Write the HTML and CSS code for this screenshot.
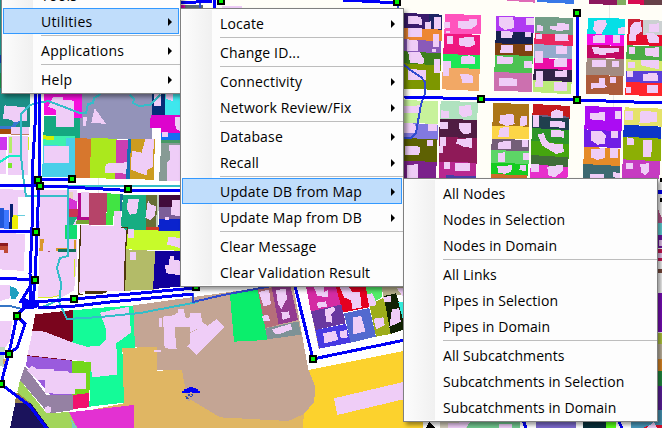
FILE: index.html
```
<!DOCTYPE html>
<html lang="en">
<head>
<meta charset="utf-8">
<title>Network map</title>
<link rel="stylesheet" href="styles.css">
</head>
<body>
<main class="workspace">
<svg class="map" viewBox="0 0 662 428" width="662" height="428" aria-hidden="true">
  <!-- north-west blocks -->
  <g transform="translate(0 90) scale(.333333)">
    <path fill="#1b8f87" d="M0-270H90V110H0z"/><path fill="#0b3c9c" d="M0-105H20V-80H0z"/><path fill="#148a43" d="M0-50H20V-5H0z"/><path fill="#fffef8" d="M90-20H132V260H90z"/>
    <path fill="#3878d0" d="M0 108H34L58 80 66 86 42 116H0z"/>
    <path fill="#a54b08" d="M0 116H33V132H0z"/>
    <path fill="#efcdf7" d="M14 46L76 52 82 60 80 92 40 96 36 90 9 86zM33 112H87V131H33z"/>
    <path stroke="#a03c18" stroke-width="2" d="M34 133H88"/>
    <path fill="#cf35ef" d="M0 141H21V179H0z"/><path fill="#efcdf7" d="M0 179H18V253H0zM30 138H84V255H24V138z"/>
    <path fill="#b5ee6a" d="M28 142H37V190H26z"/><path fill="#7be82b" d="M24 219H36V234H24z"/><path fill="#d4ef22" d="M84 142H87V180H84z"/>
    <path fill="#f610dc" d="M133 12H245V84H170V76H132z"/><path fill="#15a881" d="M132 78H168V84H242V144H130z"/>
    <path fill="#efcdf7" d="M158 22L188 20 190 30 222 32V110H168V60L145 50z"/>
    <path fill="#9393b9" d="M245 12H456V147H240V84H245z"/>
    <path fill="#efcdf7" d="M284 54L318 102 274 98zM249 82L261 80 258 108H249z"/>
    <path fill="#052f78" d="M457 12H495V76H457z"/><path fill="#3ee7ed" d="M495 12H541V76H495z"/><path fill="#efcdf7" d="M462 12H484V48H462zM498 12H520V34L498 26z"/>
    <path fill="#dd04cd" d="M452 75H541V130H484V113H450z"/><path fill="#efcdf7" d="M525 82H541V124L527 116z"/>
    <path fill="#136ff2" d="M484 130H541V153H484z"/><path fill="#efcdf7" d="M486 125H504V141H486z"/>
    <path fill="#469a64" d="M484 150H541V160H484z"/><path fill="#879b95" d="M484 158H541V272H477z"/><path fill="#efcdf7" d="M507 165H541V272H501V217L511 208z"/>
    <path fill="#3df1ae" d="M130 138H224V170H130z"/><path fill="#d3ef00" d="M129 136L162 138V150L128 148z"/>
    <path fill="#49cfe9" d="M130 164L198 168V143H226V261H126z"/><path fill="#efcdf7" d="M132 168H206V219H132z"/>
    <path fill="#d7772d" d="M225 144L273 146 270 264H225z"/><path fill="#abe81d" d="M273 143L351 147 346 267 270 263z"/>
    <path fill="#cc3fb2" d="M349 149H384L378 268H345z"/><path fill="#efcdf7" d="M317 221L380 217V251L315 248z"/>
    <path fill="#1672b2" d="M384 147H393L389 268H378z"/><path fill="#cc9c20" d="M393 148L465 146 461 270 389 266z"/>
    <path fill="#efcdf7" d="M396 182L425 188 436 146H462L458 232 441 240 440 256 420 250 392 238z"/>
    <path stroke="#ddd" stroke-width="2" d="M295 264V310"/>
  </g>
  <!-- western blocks -->
  <g transform="translate(0 190) scale(.333333)">
    <path fill="#fff" d="M0 0H80V350H0z"/>
    <path fill="#efcdf7" d="M0-3L77 0V20H54V116H0zM0 128L76 132 71 243 0 238z"/>
    <path fill="#2057d9" d="M0 54H13V114H0z"/><path fill="#3d77ff" d="M12 60H28V116H12z"/><path fill="#071f70" d="M30 42H40V116H28z"/><path fill="#eeee05" d="M38 76H54V116H35z"/><path fill="#68cddd" d="M52 75H76V79H52z"/>
    <path fill="#8d1a20" d="M0 158H24V168H0z"/><path fill="#bf4a35" d="M0 167H24V188H11V179H0z"/>
    <path fill="#efcdf7" d="M0 284L30 286 31 324 0 333z"/><path fill="#1fa0c0" d="M30 289L48 294 57 309 47 327H32z"/>
    <path fill="#efcdf7" d="M120 0H232V206L222 302 184 322H115z"/>
    <path fill="#d9982b" d="M120 148H132L128 182H118zM168 174H206V150H228V184H170z"/><path fill="#efcdf7" d="M206 150H221V178H206z"/>
    <path fill="#11dd72" d="M195 105H232V147H195z"/><path fill="#11725e" d="M174 178H228V185H174z"/>
    <path fill="#d633d4" d="M206 10H232V58H206z"/><path fill="#c93455" d="M206 56H236V84H206z"/><path fill="#1daf83" d="M206 82H232L218 106H206z"/><path fill="#e7d3bb" d="M207 7H220V27L207 24z"/><path fill="#efcdf7" d="M219 8H234V36L219 28z"/>
    <path fill="#b40a8c" d="M235 9H243V80H266V94H232z"/><path fill="#75a632" d="M230 90H267V102H228z"/><path fill="#efcdf7" d="M243 6H267V80H243z"/>
    <path fill="#b64469" d="M267 9H322L318 105H267z"/><path fill="#41e443" d="M322 10L360 12V66L342 64 338 105H318z"/><path fill="#176e97" d="M360 12H369L364 70H360z"/><path fill="#17ad82" d="M369 14L439 15V119H362z"/>
    <path fill="#efcdf7" d="M384 28L417 26 411 70 390 74 380 56zM342 62H363V110H342z"/>
    <path fill="#676e36" d="M439 15H473L468 112H437z"/><path fill="#efcdf7" d="M444 30L452 44 469 48 464 76 452 91 436 84z"/><path fill="#becbbb" d="M472 15H478L473 112H468z"/>
    <path fill="#410c3b" d="M478 15H541V53H477z"/><path fill="#7c5e98" d="M478 50H541V92H476z"/><path fill="#0b23cd" d="M477 87H541V123H474z"/><path fill="#efcdf7" d="M516 30H541V80L513 74zM495 81H507V91H495z"/>
    <path fill="#cd3b28" d="M438 112H477V122H437z"/>
    <path fill="#c7fb2a" d="M380 118L541 124V182L376 178z"/><path fill="#efcdf7" d="M384 116H402V144H384zM504 140L541 144V174L502 164z"/>
    <path fill="#b3bb68" d="M377 178L466 183 461 300 373 302z"/><path fill="#efcdf7" d="M390 185H408V210H390z"/>
    <path fill="#10009b" d="M466 183H541V290L459 297z"/><path fill="#efcdf7" d="M510 198H522V210L541 212V256L500 250 494 226H506z"/>
    <path fill="#efcdf7" d="M242 106L364 108 378 120 372 302 236 308z"/>
    <path fill="none" stroke="#4e360c" stroke-width="4" d="M242 104L240 164 238 176 236 312 250 314M364 112H382V116L376 188 374 302"/><path fill="#4e360c" d="M255 303L320 302V307L308 311H255z"/>
    <path stroke="#d7ed2a" stroke-width="3" fill="none" d="M224 206L222 262M114 322L146 324 180 316"/>
    <path fill="#a94b75" d="M144 182H150V186H144z"/>
  </g>
  <!-- south-west blocks -->
  <g transform="translate(0 290) scale(.333333)">
    <path fill="#fff" d="M0 65L1215-65V280L0 414z"/>
    <path fill="#efcdf7" d="M0 92H36L30 155 8 180H0z"/><path fill="#bdd6bd" d="M0 172L14 170 12 232 0 226z"/><path fill="#d9a65d" d="M10 206H18V222H10z"/>
    <path fill="#c4a594" d="M400 46L935-28 960 210 1010 280 1025 420H545V240H470V172H400z"/>
    <path fill="#e0b663" d="M367 168L400 173 470 170V242L546 240 562 330 660 384 760 395H912V414H140L150 384 372 340z"/>
    <path fill="#7a051d" d="M106 73L220 60V160L96 124z"/>
    <path fill="#14fb98" d="M220 61L303 53 400 47 405 174H367L372 338 268 350 272 216 216 210z"/>
    <path fill="#efcdf7" d="M98 122L134 125 216 157 260 170 297 168 317 150V115L300 68 387 50 393 128 349 160 352 254 276 262 272 216 82 196z"/>
    <path fill="none" stroke="#7a051d" stroke-width="3" d="M82 197L216 212"/>
    <path fill="#9a5bdd" d="M82 198L216 212V314H150L134 296 78 226z"/><path fill="#73d71b" d="M216 212L273 216 268 310 216 320z"/>
    <path fill="#9581a3" d="M75 228L140 316 220 316V360L146 371 60 270z"/><path fill="#efcdf7" d="M96 226L110 238H162V243H204L208 248H258V298H226V312L136 310V269H112L82 242z"/>
    <path fill="#f0126e" d="M219 315L267 309V352L219 357z"/><path fill="#a2d55b" d="M60 270L140 370 208 366 232 414H140L92 345 52 306z"/>
    <path fill="#96814c" d="M50 306L94 341H44z"/><path fill="#1b135c" d="M46 339H92L148 414H30z"/>
    <path fill="#e331d2" d="M207 367L402 345V414H232z"/><path fill="#78cbc2" d="M214 389L232 414H216z"/><circle cx="144" cy="359" r="10" fill="#efcdf7"/>
    <path fill="#efcdf7" d="M489 80L520 76 533 68 535 57H553V68L558 86 600 68V112H526V140L530 177 494 175zM478 84H486V110H478zM461 179H483V187H461zM562 170L586 140 574 126 600 118V196z"/>
  </g>
  <!-- southern blocks -->
  <g transform="translate(190 280) scale(.333333)">
    <path fill="#c4a594" d="M0 66L320 18 345 180 355 270 370 300 375 350 360 380 330 410 295 423 90 412 0 358z"/>
    <path fill="#efcdf7" d="M0 100L32 98 36 124 52 138 80 117 104 142 20 224 0 206V160L24 146 0 158z"/>
    <path fill="#e0b663" d="M0 358L90 412 295 423 342 402 338 444H0z"/>
    <path fill="#fcd22d" d="M356 270L640 213V444H338L342 402 373 365 375 318 365 292z"/>
    <path fill="#fff" d="M310 18H348L386 206 640 150V212L355 270z"/>
    <path fill="#efcdf7" d="M432 355L640 306V358L442 405z"/>
    <path fill="#0bee6c" d="M120 44L205 28 232 180 132 185z"/><path fill="#b56f7a" d="M203 28L248 22 268 134 226 144z"/><path fill="#943c91" d="M245 22L302 20 324 120 266 134z"/><path fill="#7e9296" d="M226 145L325 124 334 164 232 178z"/>
    <path fill="#efcdf7" d="M207 36L237 29 243 72 221 80zM258 30L289 26 290 58 274 88 264 72zM216 108L234 104 240 122 220 124zM274 97L297 94 300 112 278 120zM246 148L303 131 306 148 264 164 252 160z"/>
    <path fill="#d42ba3" d="M348 20H441L458 74 363 96z"/><path fill="#e50021" d="M438 20H527L538 82 458 98z"/><path fill="#52ec69" d="M527 20H575V52L538 74z"/><path fill="#b3ad89" d="M575 20H640V42L580 54z"/>
    <path fill="#6938a0" d="M363 94L454 74 467 130 376 150z"/><path fill="#483ae2" d="M376 150L468 132 482 188 387 206z"/><path fill="#5369cf" d="M462 100L538 84 558 170 482 188z"/><path fill="#9dad1a" d="M538 74L582 52 602 162 558 170z"/><path fill="#112203" d="M581 48L618 40 639 100V150L602 162z"/><path fill="#33ecdb" d="M625 66H640V125z"/>
    <path fill="#efcdf7" d="M372 22H402V36L415 30V52L382 48zM380 68L408 64 411 80 384 84zM450 22H478L486 36H510L515 82 486 88 484 62 462 52zM530 42L546 40 556 60 558 76 538 80zM404 88L433 80 435 92 424 102 426 128 409 126zM490 112L514 108 526 154 488 164zM400 160L436 152 446 180 402 190zM450 154L470 150 473 172 452 176zM550 116L580 112 584 136 558 148zM580 52L604 46V66H582zM606 88L628 84 632 126 598 140zM620 24H640V52z"/>
  </g>
  <!-- north-east blocks -->
  <g transform="translate(400 0) scale(.333333)">
    <path fill="#fffef7" d="M10 0H786V540H10z"/>
    <path fill="#3a1b6d" d="M12 39L90 42V90L12 86z"/><path fill="#1e2464" d="M88 42L126 44V90H88z"/><path fill="#ed8733" d="M12 85L126 89V124H12z"/><path fill="#8a5ab9" d="M12 118L124 124V160H12z"/><path fill="#3e801d" d="M12 154L123 160V196H12z"/><path fill="#7d9700" d="M12 190L122 196 120 270 12 266z"/>
    <path fill="#efcdf7" d="M24 48L64 50 66 74 24 72zM74 67L92 64V86H74zM102 52H122V88L102 86zM24 84H66V110H24zM99 102H117V140H99zM22 118L54 122V152H22zM96 147H108V156H96zM24 155L60 157 72 178 70 192 30 188zM102 178H120V218H102zM24 207L77 210V240H24z"/>
    <path fill="#ff54bd" d="M135 42L243 45V102L133 106z"/><path fill="#ef177f" d="M132 102L241 104V166L130 162z"/><path fill="#1ce754" d="M130 162L241 166V207H128z"/><path fill="#f2a865" d="M128 202L239 207 237 273 126 268z"/>
    <path fill="#efcdf7" d="M132 66H150V84H132zM174 64H208V58L231 56V74L214 87 174 85zM138 92H150V100H138zM141 109H160V133H141zM176 114L222 110 225 134 206 142 178 136zM182 170L208 166 225 172V192H182zM130 184H153V204H146V228H130zM180 222H202L219 228V248L188 250z"/>
    <path fill="#b03bf2" d="M289 47L402 52V100L288 94z"/><path fill="#17204f" d="M288 94L399 98V134L286 130z"/><path fill="#7f4210" d="M286 130L399 133V168L285 164z"/><path fill="#4cc252" d="M285 164L399 168 396 220 283 216z"/><path fill="#cc70af" d="M283 216L396 220V276L282 272z"/>
    <path fill="#efcdf7" d="M298 50L340 52 342 84 314 90 298 78zM378 53H401V74H378zM302 93L338 95 337 115H302zM376 96H393V110H376zM304 134L339 136V160H300zM376 134H396V153H376zM292 168L340 172 337 192H292zM372 184H397V204H372zM298 234L350 236V258H298z"/>
    <path fill="#c7f29b" d="M12 300L115 304 113 372 12 368z"/><path fill="#8279e1" d="M12 368L113 374V420L12 414z"/><path fill="#5e6103" d="M12 414L112 418V486L12 482z"/><path fill="#7b228b" d="M12 482L110 486 108 540H12z"/>
    <path fill="#efcdf7" d="M12 318L63 316 64 338H12zM12 369L46 371 48 398H12zM84 372H112V394H84zM14 437L60 440 58 466H14zM82 420H99V438H82zM20 496L54 492V540H20z"/>
    <path fill="#b0e2bf" d="M122 303L235 306 231 360 119 356z"/><path fill="#501c43" d="M119 356L231 360V416L118 410z"/><path fill="#8f1a58" d="M118 410L230 415V492L117 486z"/><path fill="#b82890" d="M117 486L229 488 228 540H116z"/>
    <path fill="#efcdf7" d="M178 318L213 315 216 346 188 353 178 342zM124 331L147 334V354H124zM177 369H212V400L190 402 177 386zM120 366H144V387H120zM120 410H138V438H128V458H116V438H120zM172 418L216 414V444L190 440 168 430zM132 486H150V506H132zM165 488L211 490V514H165z"/><path fill="#4b3fa7" d="M138 526L228 528V540H138z"/>
    <path fill="#ac7618" d="M280 309L387 312V380L277 378z"/><path fill="#fcd547" d="M276 377L386 380V418L275 416z"/><path fill="#745f78" d="M275 416L386 420V454L274 450z"/><path fill="#5dd566" d="M274 450L386 454V492L273 488z"/><path fill="#15cc20" d="M273 488L384 492V528L274 524z"/><path fill="#cd6c2b" d="M274 522L382 526V540H273z"/>
    <path fill="#efcdf7" d="M300 345L340 342 344 372 320 378 298 370zM362 348H381V376L360 378zM300 384L328 380 326 412H294zM296 426L332 422V447H294zM366 420H383V440H366zM294 460L316 456V486H294zM370 460H387V479H370zM292 498L336 496 334 514 316 522 294 518zM360 495H378V514L358 510z"/>
  </g>
  <g transform="translate(530 0) scale(.333333)">
    <path fill="#3878e7" d="M21-3H132V12L21 6z"/><path fill="#8c185e" d="M177-3H260V15L177 12z"/><path fill="#82ae61" d="M260 0H288V16L260 14z"/><path fill="#d80b53" d="M294 0H341V14L294 12z"/><path fill="#664149" d="M341 0H396V16H341z"/><path fill="#df69b6" d="M-70 0H15V8L-70 2z"/><path stroke="#ddd" stroke-width="2" d="M238 16V60M250 285V322"/>
    <path fill="#739e87" d="M16 50L129 54V108L14 100z"/><path fill="#eb275e" d="M14 100L128 104V138L13 132z"/><path fill="#93aacc" d="M13 132L127 138V176L12 174z"/><path fill="#eb0da6" d="M12 174L127 178V210L11 206z"/><path fill="#312346" d="M11 206L126 210V246L10 242z"/><path fill="#bceb7a" d="M10 240L125 246 122 283 9 276z"/>
    <path fill="#efcdf7" d="M21 74L39 78V93H21zM61 77H82V68L117 72V90L82 93 61 87zM18 102H36V116H18zM76 103L114 102 116 124H76zM78 138H110V162H78zM16 154H38V188H16zM74 176L112 174V200H72zM18 213H38V260H16zM76 214L111 210V231H76zM72 246H111V272H72z"/>
    <path fill="#05dfe6" d="M174 53L286 56V106L172 102z"/><path fill="#f50de5" d="M172 102L283 106V138L171 134z"/><path fill="#c20864" d="M171 134L282 138V176L170 174z"/><path fill="#a38b81" d="M170 174L281 177V228L168 224z"/><path fill="#ad5b3a" d="M168 224L279 228V285L168 281z"/>
    <path fill="#efcdf7" d="M192 62L226 60 231 74 214 102H200L190 88zM264 84L285 80V101H264zM190 107L224 104V130H190zM250 105H270V130H250zM186 142L268 144 268 156 228 160V166L192 162zM186 181L228 180V202H186zM246 184H267V200H246zM208 234H224V250L232 262 184 266V250H206zM240 230H258V248H240z"/>
    <path fill="#cb2136" d="M295 57L339 59V106H294z"/><path fill="#ccd1d2" d="M339 59L396 62V106L339 104z"/><path fill="#e60c2c" d="M292 103L396 106V138L291 134z"/><path fill="#4cac47" d="M290 136L396 139V184L289 178z"/><path fill="#d4e96c" d="M289 178L396 182V217L288 212z"/><path fill="#5b3fd8" d="M288 212L396 214V252L287 246z"/><path fill="#ff262b" d="M287 246L396 250V289L286 285z"/>
    <path fill="#efcdf7" d="M310 68L334 64 335 95 318 106V122H297L300 82zM358 73L386 70V96H358zM348 100L368 98 386 110V130L356 128zM297 141H315V162H297zM346 144L386 142V172L346 166zM293 186H316V204H293zM333 180H387V208L356 202 334 196zM291 214H308V230H291zM340 222L382 218 384 242H340zM288 262H303V280H288zM352 256H384V278H352z"/>
    <path fill="#c51b1d" d="M10 312L120 318V356L7 346z"/><path fill="#6b6081" d="M7 344L118 350V360L7 352z"/><path fill="#20404e" d="M6 348L117 354V390L6 386z"/><path fill="#2d942b" d="M6 384L116 390V438L4 430z"/><path fill="#45a50e" d="M4 422L116 432V476L3 466z"/><path fill="#406d39" d="M3 465L114 472V504L2 496z"/><path fill="#e730cc" d="M2 492L114 502 112 540H0z"/>
    <path fill="#efcdf7" d="M62 336L78 328 99 334V354H62zM9 346H27V380H9zM60 362H84L104 366V384L60 380zM64 390L102 392V413L64 410zM22 402L42 400 48 420 62 430 98 432 102 456 78 462 36 436zM2 492H26V516H2zM52 500L98 494V514L74 532 54 526z"/>
    <path fill="#ab0cf3" d="M166 318L276 322V394L163 388z"/><path fill="#701ee5" d="M163 388L272 394V444L162 440z"/><path fill="#e58b28" d="M162 440L271 446V498L160 492z"/><path fill="#3d6970" d="M160 492L270 498V540H158z"/>
    <path fill="#efcdf7" d="M180 340L225 336V362L180 358zM255 333H273V356H255zM184 394L212 392 228 406 224 432 202 434 182 420zM244 394H264V414H244zM184 448L224 444V474L202 480 183 472zM240 444H264V473H240zM180 522H222V540H180zM250 516L270 520V540L248 530z"/>
    <path fill="#e5e26a" d="M284 322L396 326V380L281 374z"/><path fill="#0c36c8" d="M281 374L393 380V418L280 412z"/><path fill="#8caf05" d="M280 410L392 416V484L278 478z"/><path fill="#c63bc1" d="M278 478L390 484 388 540H276z"/>
    <path fill="#efcdf7" d="M285 334H309V360H285zM332 332L381 336V366L328 370zM292 412L312 416V434H292zM340 420H366L364 470H340zM288 489H309V507H288zM330 492L356 490V514L346 526 334 518z"/>
  </g>
  <!-- slivers visible beside the submenus -->
  <g>
    <path fill="#fff" d="M655 179H662V428H655z"/><path fill="#0000f7" d="M658 190H662V194H658z"/><path fill="#000" d="M660 178H662V182H660zM660 198H662V202H660z"/>
    <path fill="#c25c93" d="M657 207L662 218V224H657z"/><path fill="#64d9df" d="M657 223H662V235H657z"/><path fill="#7015a6" d="M657 235H662V248H657z"/><path fill="#ce1855" d="M657 249H662V261H657z"/><path fill="#7b4b3e" d="M657 269H662V273H657z"/><path fill="#efcdf7" d="M659 240H662V246H659zM658 253H662V258H658z"/>
    <path fill="#7d0ebe" d="M657 293H662V332H657z"/><path fill="#b8cd3f" d="M657 333H662V344H657z"/><path fill="#c8bda7" d="M657 344H662V359H657z"/><path fill="#e48d27" d="M657 359H662V371H657z"/><path fill="#239045" d="M657 371H662V386H657z"/><path fill="#5f22a2" d="M657 386H662V410H657z"/><path fill="#4999bc" d="M657 410H662V428H657z"/>
    <path fill="#fff" d="M404 420H657V428H404z"/><path fill="#fcd22d" d="M403 420H423V428H403z"/><path fill="#d1cbb9" d="M440 422H467V428H440z"/><path fill="#72c890" d="M467 422H520V428H467z"/><path fill="#efcdf7" d="M448 423L470 422 466 428H448zM499 424H512V428H499z"/><path fill="#7d6bce" d="M536 422H576V428H536z"/><path fill="#08303b" d="M583 422H606V428H583z"/><path fill="#56ff17" d="M606 422H616V428H606z"/><path fill="#4999bc" d="M631 422H657V428H631z"/><path fill="#dc102e" d="M643 428L650 425H662V428z"/><path fill="#efcdf7" d="M646 428L654 422 657 428z"/>
    <path stroke="#0000f7" stroke-width="3" d="M523 420L526 428M618 420L622 428"/><path d="M429 422L435 428H426z"/>
  </g>
  <!-- top edge between the menus -->
  <g><path fill="#fffef7" d="M180 0H404V9H180z"/><path fill="#dd04ad" d="M180 5H185V8H180z"/><path fill="#5c6970" d="M185 5H203V8H185z"/><path fill="#efcdf7" d="M222 6H242V8H222z"/></g>
  <!-- streams -->
  <g class="stream">
    <path d="M0 162L9 156H20" stroke="#15edc7"/>
    <path d="M20 115L30 105 48 101 64 107 80 113H86L88 104 93 103 94 98 101 94M130 95L134 99 133 103 139 106 150 105 160 95M21 115V156L24 183 26 196H68V186H180M68 196V256L60 258 57 268 61 283 60 298 52 303 40 308M58 300L67 319 100 317 140 313 198 302"/>
    <path stroke="#3676c5" d="M0 306L10 306 22 309 30 306"/>
    <path stroke="#304bd0" d="M193 293V302L223 295 272 286M404 65L413 72 421 77 425 82V94L421 104 416 133 411 138H404M200 0V8M398 5V8"/>
  </g>
  <!-- pipes -->
  <g class="pipe">
    <path d="M35 92V125L32 176 33 195 32 228 30 274 31 302M39 92V182L37 232 35 280 33 302M0 185L38 186 68 187 120 190 180 190M37 180L72 179M0 231L35 232M0 278L34 280M20 303L34 280M22 303L74 299 130 294 195 288M38 308L75 306 110 302 193 294M16 316L28 304M17 316L9 353 1 384M17 316L25 324 17 348 9 353H0M1 384L30 406 48 430"/>
    <path d="M295 286L313 359 405 340M404 97L481 99 577 100 662 103M577 13V100M180 3L212 1M214 0V8M343 0L398 3M180 2H192"/>
  </g>
  <path fill="#0000f7" d="M22 297L34 302 39 300V307L32 309H22z"/>
  <g class="node">
    <path d="M35 177h6v6h-6zM37 183h6v6h-6zM69 176h6v6h-6zM125 186h6v6h-6zM33 229h6v6h-6zM32 277h6v6h-6zM71 296h6v6h-6zM14 313h6v6h-6zM6 351h6v6h-6zM-2 381h6v6h-6zM310 356h6v6h-6zM478 96h6v6h-6zM574 10h6v6h-6zM574 97h6v6h-6zM193 284h6v6h-6zM218-2h6v6h-6zM394-1h6v6h-6z"/>
  </g>
  <!-- rain gauge -->
  <path fill="#0000f7" d="M182 393V391H184V389H187V388H189V387H193V388H196V389H198V391H200V393H193L191 392 189 393z"/>
  <path fill="#2945bd" d="M188 394h2v2h-2zM192 394h1v2h-1zM186 397h2v2h-2zM190 396h2v1h-2z"/><path fill="#896820" d="M185 396h2v1h-2zM191 394h1v1h-1zM188 398h1v1h-1z"/>
</svg>

<nav class="menu menu-main">
  <ul class="menu-list">
    <li class="item has-submenu"><span>Tools</span></li>
    <li class="item has-submenu active"><span>Utilities</span></li>
    <li class="separator"></li>
    <li class="item has-submenu"><span>Applications</span></li>
    <li class="separator"></li>
    <li class="item has-submenu"><span>Help</span></li>
  </ul>
</nav>

<nav class="menu menu-utilities">
  <ul class="menu-list">
    <li class="item has-submenu"><span>Locate</span></li>
    <li class="separator"></li>
    <li class="item"><span>Change ID...</span></li>
    <li class="separator"></li>
    <li class="item has-submenu"><span>Connectivity</span></li>
    <li class="item has-submenu"><span>Network Review/Fix</span></li>
    <li class="separator"></li>
    <li class="item has-submenu"><span>Database</span></li>
    <li class="item has-submenu"><span>Recall</span></li>
    <li class="separator"></li>
    <li class="item has-submenu active"><span>Update DB from Map</span></li>
    <li class="item has-submenu"><span>Update Map from DB</span></li>
    <li class="separator"></li>
    <li class="item"><span>Clear Message</span></li>
    <li class="item"><span>Clear Validation Result</span></li>
  </ul>
</nav>

<nav class="menu menu-update">
  <ul class="menu-list">
    <li class="item"><span>All Nodes</span></li>
    <li class="item"><span>Nodes in Selection</span></li>
    <li class="item"><span>Nodes in Domain</span></li>
    <li class="separator"></li>
    <li class="item"><span>All Links</span></li>
    <li class="item"><span>Pipes in Selection</span></li>
    <li class="item"><span>Pipes in Domain</span></li>
    <li class="separator"></li>
    <li class="item"><span>All Subcatchments</span></li>
    <li class="item"><span>Subcatchments in Selection</span></li>
    <li class="item"><span>Subcatchments in Domain</span></li>
  </ul>
</nav>
</main>
</body>
</html>
```
FILE: styles.css
```
* { box-sizing: border-box; }
body { margin: 0; background: #fff; }

.workspace {
  position: relative;
  width: 662px;
  height: 428px;
  overflow: hidden;
  font: 14px/24px "Open Sans", "Noto Sans", sans-serif;
  color: #000;
}

.map { display: block; shape-rendering: crispEdges; }
.stream { fill: none; stroke: #35bdc9; stroke-width: 2; }
.pipe { fill: none; stroke: #0000f7; stroke-width: 3; }
.node { fill: #00f000; stroke: #000; stroke-width: 2; }

.menu {
  position: absolute;
  border: 1px solid #808080;
  padding: 1px 1px 0;
  background: linear-gradient(90deg, #fcfcfc, #f0f0f0) 1px 1px / 30px calc(100% - 2px) no-repeat #fdfdfd;
  box-shadow: 3px 3px 4px rgba(0, 0, 0, .4);
  letter-spacing: .17px;
}
.menu-list { list-style: none; margin: 0; padding: 0; }

.menu-main { left: 1px; top: -20px; width: 180px; height: 114px; letter-spacing: .3px; }
.menu-utilities { left: 180px; top: 8px; width: 224px; height: 279px; }
.menu-update { left: 403px; top: 178px; width: 255px; height: 244px; letter-spacing: .08px; }

.item {
  display: flex;
  align-items: center;
  justify-content: space-between;
  height: 26px;
  padding: 2px 6px 0 37px;
  border: 1px solid transparent;
  white-space: nowrap;
}
.item.active { background: #c0ddfb; border-color: #3399ff; }
.has-submenu::after {
  content: "";
  border: 4px solid transparent;
  border-left-color: #000;
  border-right-width: 0;
}
.separator { height: 3px; margin: 0 -1px 0 38px; padding-top: 1px; }
.separator::before { content: ""; display: block; height: 1px; background: #bdbdbd; }
```
